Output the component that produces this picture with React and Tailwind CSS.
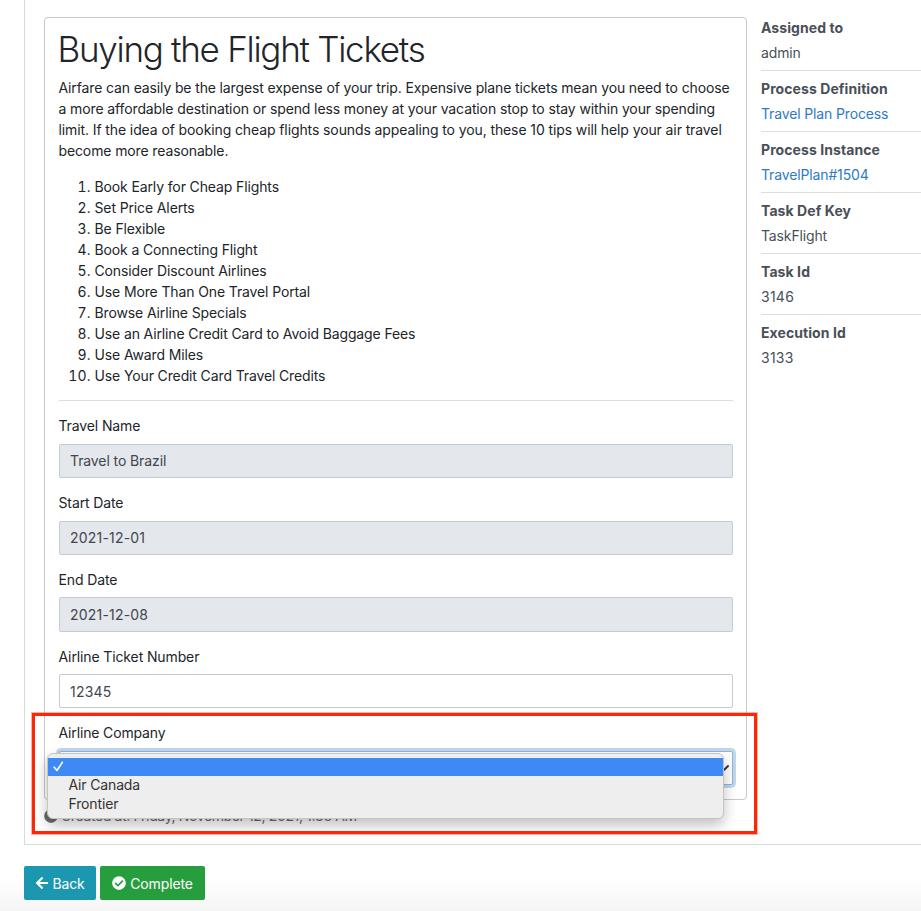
import React from "react";
import { FaArrowLeft, FaCheckCircle, FaCircle } from "react-icons/fa";

const tips = [
  "Book Early for Cheap Flights",
  "Set Price Alerts",
  "Be Flexible",
  "Book a Connecting Flight",
  "Consider Discount Airlines",
  "Use More Than One Travel Portal",
  "Browse Airline Specials",
  "Use an Airline Credit Card to Avoid Baggage Fees",
  "Use Award Miles",
  "Use Your Credit Card Travel Credits",
];

const fields = [
  { label: "Travel Name", value: "Travel to Brazil", readOnly: true },
  { label: "Start Date", value: "2021-12-01", readOnly: true, numeric: true },
  { label: "End Date", value: "2021-12-08", readOnly: true, numeric: true },
  { label: "Airline Ticket Number", value: "12345", readOnly: false, numeric: true },
];

const details = [
  { label: "Assigned to", value: "admin" },
  { label: "Process Definition", value: "Travel Plan Process", link: true },
  { label: "Process Instance", value: "TravelPlan#1504", link: true },
  { label: "Task Def Key", value: "TaskFlight" },
  { label: "Task Id", value: "3146", numeric: true },
  { label: "Execution Id", value: "3133", numeric: true },
];

function Field({ label, value, readOnly, numeric }) {
  return (
    <div className="mb-[14px]">
      <div className="mb-[7.5px] h-[21px] leading-[21px] tracking-[-0.12px]">{label}</div>
      <div
        className={
          "flex h-[34.25px] items-center rounded-[2px] border border-[#c3ccd6] px-[10.5px] text-[#41464c] " +
          (readOnly ? "bg-[#e4e7ec] " : "bg-white ") +
          (numeric ? "tracking-[0.2px]" : "tracking-[-0.1px]")
        }
      >
        {value}
      </div>
    </div>
  );
}

function SelectMenu() {
  return (
    <div className="absolute top-[2px] -left-[12px] h-[66px] w-[677px] rounded-[6px] border border-[#c4c4c4] bg-[#eeeeee] pt-[4px] text-[#333] shadow-[0_6px_14px_rgba(0,0,0,0.25)]">
      <div className="flex h-[18px] items-center bg-[#3d89f6] pl-[5px]">
        <svg width="11" height="11" viewBox="0 0 11 11" fill="none" stroke="white" strokeWidth="1.6" strokeLinecap="round" strokeLinejoin="round">
          <path d="M1.2 6.2 4 9.5 9.4 1.3" />
        </svg>
      </div>
      <div className="h-[19px] pl-[21px] leading-[18px]">Air Canada</div>
      <div className="h-[19px] pl-[21px] leading-[18px]">Frontier</div>
    </div>
  );
}

export default function App() {
  return (
    <div className="h-[911px] w-[921px] overflow-hidden bg-[linear-gradient(to_bottom,#fff_878px,#f5f5f5_911px)] pl-[24px] font-['Inter','Liberation_Sans',sans-serif] text-[14px] leading-[21px] tracking-[-0.15px] text-[#212529]">
      <div className="flex h-[845px] border-b border-l border-[#d8dadc] pt-[17px] pl-[19px]">
        <main className="w-[703px] shrink-0">
          <section className="relative h-[783px] rounded-[4px] border border-[#c8c9cb] px-[13.5px] pt-[10px]">
            <h1 className="-ml-px h-[49px] text-[35px] leading-[42px] font-[350] tracking-[-1.27px] whitespace-nowrap">
              Buying the Flight Tickets
            </h1>
            <p className="mb-[15px] whitespace-nowrap">
              <span className="block tracking-[-0.135px]">Airfare can easily be the largest expense of your trip. Expensive plane tickets mean you need to choose</span>
              <span className="block tracking-[-0.115px]">a more affordable destination or spend less money at your vacation stop to stay within your spending</span>
              <span className="block tracking-[-0.105px]">limit. If the idea of booking cheap flights sounds appealing to you, these 10 tips will help your air travel</span>
              <span className="block tracking-[-0.12px]">become more reasonable.</span>
            </p>
            <ol>
              {tips.map((tip, i) => (
                <li key={tip} className="flex">
                  <span className="w-[36px] pr-[4px] text-right tracking-[0.1px] tabular-nums">{i + 1}.</span>
                  <span className="tracking-[-0.125px]">{tip}</span>
                </li>
              ))}
            </ol>
            <hr className="mt-[14px] mb-[14.25px] border-[#dedede]" />
            {fields.map((f) => (
              <Field key={f.label} {...f} />
            ))}
            <div className="-mt-[0.25px] mb-[7.5px]">Airline Company</div>
            <div className="relative">
              <div className="flex h-[34.5px] items-center justify-end rounded-[2px] border border-[#8fb5dc] bg-white pr-[3px] shadow-[0_0_0_3px_#c1d8ec]">
                <svg width="10" height="10" viewBox="0 0 10 10" fill="none" stroke="#343a40" strokeWidth="2" strokeLinecap="round" strokeLinejoin="round">
                  <path d="M1 3 5 7 9 3" />
                </svg>
              </div>
              <SelectMenu />
            </div>
            <div className="pointer-events-none absolute top-[695px] -left-[13px] z-10 h-[121px] w-[725px] border-3 border-[#fb2807] shadow-[0_0_0_1px_rgba(251,40,7,0.35)]" />
          </section>
          <div className="flex h-[31px] items-center gap-[4px] text-[#6b6b6b]">
            <FaCircle size={14} />
            <span className="-ml-px tracking-[-0.37px]">Created at: Friday, November 12, 2021, 1:38 AM</span>
          </div>
        </main>
        <aside className="ml-[14px] flex-1 text-[#495057]">
          {details.map((d, i) => (
            <div
              key={d.label}
              className={(i === 0 ? "h-[54px] " : "h-[61px] pt-[7px] ") + (i < 5 ? "border-b border-[#dedede]" : "")}
            >
              <div className="font-bold tracking-[0.08px]">{d.label}</div>
              <div
                className={
                  "mt-[4px] " +
                  (d.link ? "text-[#2e7bc4] " : "") +
                  (d.numeric ? "tracking-[0.25px]" : "tracking-[-0.14px]")
                }
              >
                {d.value}
              </div>
            </div>
          ))}
        </aside>
      </div>
      <div className="mt-[21px] flex gap-[4px] text-white">
        <button className="flex h-[34px] w-[72px] items-center justify-center gap-[3px] rounded-[2px] bg-[#1b98b0]">
          <FaArrowLeft size={14} />
          Back
        </button>
        <button className="flex h-[34px] w-[105px] items-center justify-center gap-[4px] rounded-[2px] bg-[#279e3e]">
          <FaCheckCircle size={14} />
          Complete
        </button>
      </div>
    </div>
  );
}
